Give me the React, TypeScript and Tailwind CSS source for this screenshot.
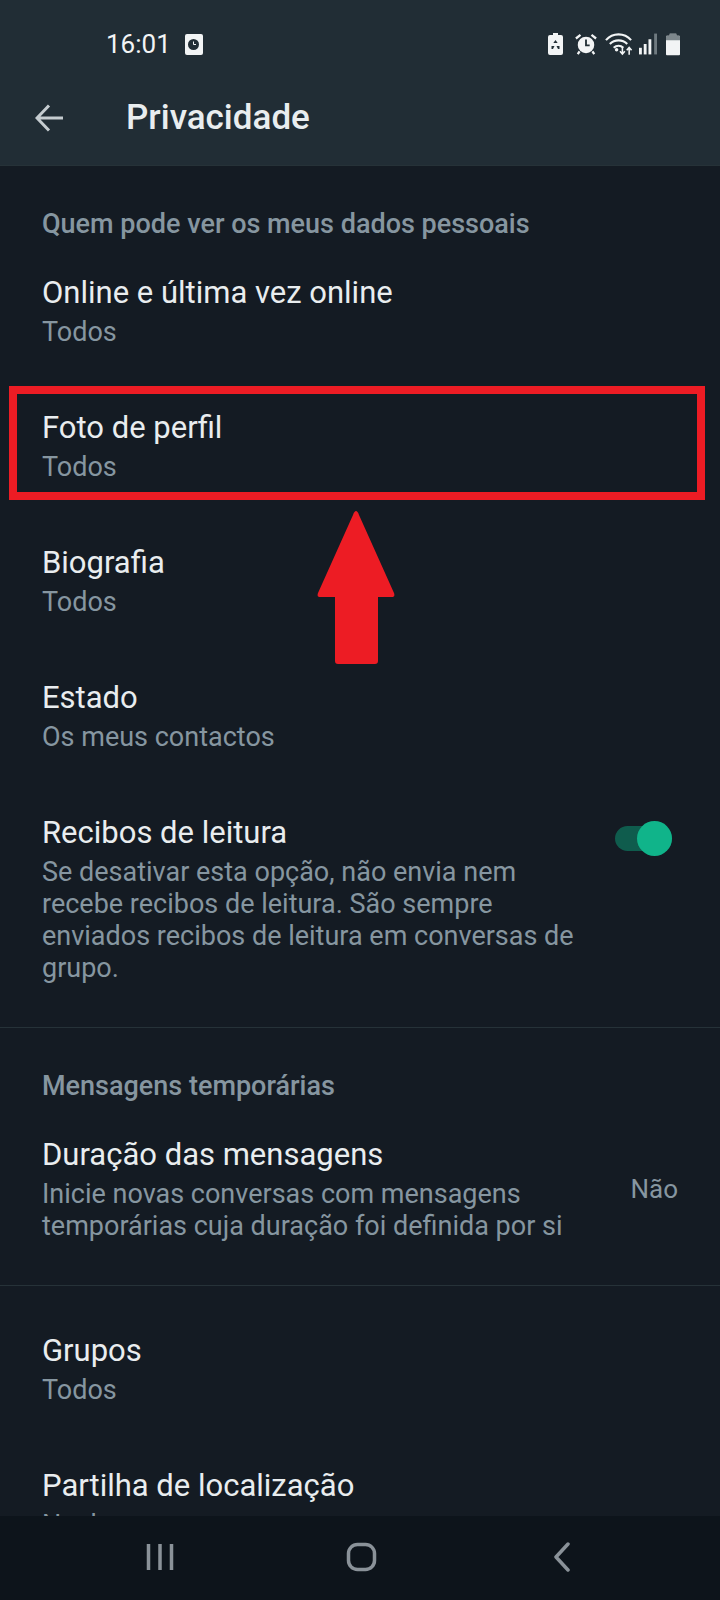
import React from 'react';

const font = { fontFamily: 'Roboto, sans-serif' };

const StatusIcons = () => (
  <div className="flex items-center">
    {/* bateria com reciclagem */}
    <svg width="15" height="22" viewBox="0 0 15 22">
      <path d="M5 0h5v2h3a2 2 0 0 1 2 2v16a2 2 0 0 1-2 2H2a2 2 0 0 1-2-2V4a2 2 0 0 1 2-2h3z" fill="#f2f4f5" />
      <path d="M7.500 7l2.200 3H5.300zM3.500 13l3 0-1.500 3H3.500zM11.500 13l-3 0 1.500 3h1.500z" fill="#222e35" />
    </svg>
    {/* alarme */}
    <svg width="22" height="24" viewBox="0 0 24 24" className="ml-3">
      <circle cx="12" cy="13" r="9" fill="#f2f4f5" />
      <path d="M12 7v6.500h4" stroke="#222e35" strokeWidth="2" fill="none" />
      <path d="M1 6l5-4M23 6l-5-4M5 20l-2 3M19 20l2 3" stroke="#f2f4f5" strokeWidth="2.500" fill="none" />
    </svg>
    {/* wifi */}
    <svg width="29" height="24" viewBox="0 0 30 24" className="ml-2">
      <path d="M1 8c7-8 19-8 26 0M5 12c5-5 13-5 18 0M9 16c3-3 7-3 10 0" stroke="#f2f4f5" strokeWidth="2.200" fill="none" />
      <circle cx="12" cy="18" r="1.800" fill="#f2f4f5" />
      <path d="M18 15v7m-2.500-2.500l2.500 3 2.500-3M25 23v-7m-2.500 2.500l2.500-3 2.500 3" stroke="#f2f4f5" strokeWidth="1.600" fill="none" />
    </svg>
    {/* sinal */}
    <svg width="18" height="22" viewBox="0 0 19 22" className="ml-[5px]">
      <rect x="0" y="15" width="3" height="7" fill="#f2f4f5" />
      <rect x="5" y="11" width="3" height="11" fill="#f2f4f5" />
      <rect x="10" y="6" width="3" height="16" fill="#f2f4f5" />
      <rect x="16" y="0" width="3" height="22" fill="#6f7a80" />
    </svg>
    {/* bateria */}
    <svg width="14" height="23" viewBox="0 0 15 23" className="ml-[9px]">
      <path d="M4 0h7v2h3a1 1 0 0 1 1 1v19a1 1 0 0 1-1 1H1a1 1 0 0 1-1-1V3a1 1 0 0 1 1-1h3z" fill="#f2f4f5" />
      <path d="M4 0h7v2h3a1 1 0 0 1 1 1v4H0V3a1 1 0 0 1 1-1h3z" fill="#7d878c" />
    </svg>
  </div>
);

const SectionTitle = ({ children }: { children: React.ReactNode }) => (
  <h2 className="px-[42px] text-[27px] leading-[32px] font-medium text-[#8696a0] mb-[3px]">{children}</h2>
);

const Row = ({ title, sub, right }: { title: string; sub: React.ReactNode; right?: React.ReactNode }) => (
  <div className="flex justify-between pl-[42px] pr-[42px] py-[30px]">
    <div>
      <div className="text-[31px] leading-[40px] text-[#e9edef]">{title}</div>
      <div className="mt-[3px] text-[27px] leading-[32px] text-[#8696a0]">{sub}</div>
    </div>
    {right}
  </div>
);

export default function App() {
  return (
    <div className="relative flex h-[1600px] w-[720px] flex-col overflow-hidden bg-[#141b23]" style={font}>
      <header className="h-[166px] shrink-0 border-b border-[#263238] bg-[#212d35]">
        <div className="flex h-[88px] items-center justify-between pl-[106px] pr-[40px]">
          <div className="flex items-center">
            <span className="text-[26px] leading-[32px] text-[#f2f4f5]">16:01</span>
            <div className="ml-[14px] flex h-[21px] w-[18px] items-center justify-center rounded-[2px] bg-[#f2f4f5]">
              <svg width="11" height="11" viewBox="0 0 11 11">
                <circle cx="5.500" cy="5.500" r="5.500" fill="#222e35" />
                <path d="M5.500 2.500v3h2.500" stroke="#f2f4f5" strokeWidth="1" fill="none" />
              </svg>
            </div>
          </div>
          <StatusIcons />
        </div>
        <div className="flex h-[60px] items-center pl-[35px]">
          <svg width="29" height="28" viewBox="0 0 29 28" fill="none" stroke="#c5ccd0" strokeWidth="3">
            <path d="M28 14H3M14 1.500L2 14l12 12.500" />
          </svg>
          <h1 className="ml-[62px] text-[35px] leading-[40px] font-medium text-[#e9edef]">Privacidade</h1>
        </div>
      </header>

      <main className="min-h-0 flex-1 overflow-hidden pt-[42px]">
        <SectionTitle>Quem pode ver os meus dados pessoais</SectionTitle>
        <Row title="Online e última vez online" sub="Todos" />
        <Row title="Foto de perfil" sub="Todos" />
        <Row title="Biografia" sub="Todos" />
        <Row title="Estado" sub="Os meus contactos" />
        <Row
          title="Recibos de leitura"
          sub={
            <>
              Se desativar esta opção, não envia nem
              <br />
              recebe recibos de leitura. São sempre
              <br />
              enviados recibos de leitura em conversas de
              <br />
              grupo.
            </>
          }
          right={
            <div className="mr-[6px] mt-[7px] flex h-[36px] w-[57px] items-center">
              <div className="relative h-[25px] w-[57px] rounded-full bg-[#0f5c4d]">
                <div className="absolute -top-[5px] right-0 h-[35px] w-[35px] rounded-full bg-[#10b48a]" />
              </div>
            </div>
          }
        />
        <div className="mt-[13px] border-t border-[#263238] pt-[42px]">
          <SectionTitle>Mensagens temporárias</SectionTitle>
          <Row
            title="Duração das mensagens"
            sub={
              <>
                Inicie novas conversas com mensagens
                <br />
                temporárias cuja duração foi definida por si
              </>
            }
            right={<span className="mt-[38px] text-[26px] leading-[32px] text-[#8696a0]">Não</span>}
          />
        </div>
        <div className="mt-[13px] border-t border-[#263238] pt-[15px]">
          <Row title="Grupos" sub="Todos" />
          <Row title="Partilha de localização" sub="Nenhum" />
        </div>
      </main>

      <nav className="flex h-[84px] shrink-0 bg-[#0d141b] pt-[26px]">
        <svg width="720" height="32" viewBox="0 0 720 32" fill="none" stroke="#8a9299">
          <path d="M148.500 2v26M160 2v26M171.500 2v26" strokeWidth="3.500" />
          <rect x="348.500" y="2.500" width="26" height="25" rx="9" strokeWidth="3.500" />
          <path d="M568 2l-12 13 12 13" strokeWidth="3.500" strokeLinecap="round" strokeLinejoin="round" />
        </svg>
      </nav>

      {/* anotação vermelha por cima da captura */}
      <div className="absolute left-[9px] top-[386px] h-[114px] w-[696px] border-[8px] border-[#ed1c24]" />
      <svg className="absolute left-[316px] top-[510px]" width="80" height="156" viewBox="0 0 80 156">
        <path d="M40 1c1 0 2 1 3 4l35 78c1 3 0 4-2 4H62v64c0 2-1 3-3 3H22c-2 0-3-1-3-3V87H4c-2 0-3-1-2-4L37 5c1-3 2-4 3-4z" fill="#ed1c24" />
      </svg>
    </div>
  );
}
